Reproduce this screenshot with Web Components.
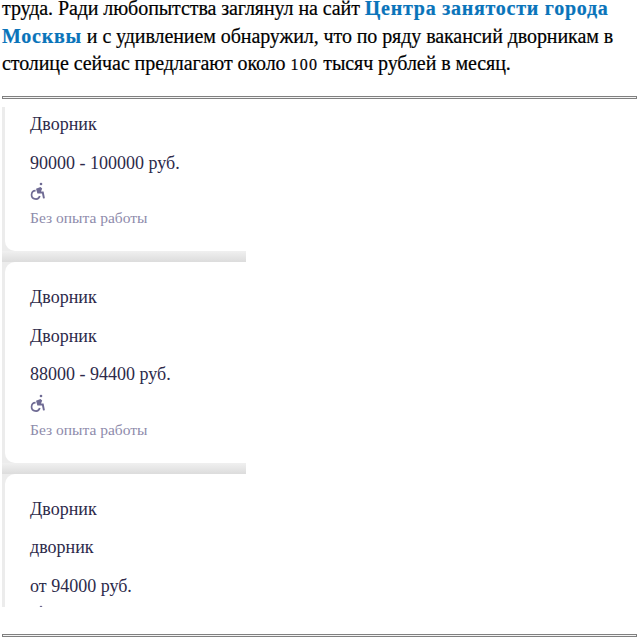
<!DOCTYPE html>
<html><head><meta charset="utf-8"><style>
html,body{margin:0;padding:0;background:#fff;overflow:hidden}
body{width:637px;height:638px}
</style></head><body>
<article-page>
<job-card><span>Дворник</span><span>90000 - 100000 руб.</span><small slot="exp">Без опыта работы</small></job-card>
<job-card><span>Дворник</span><span>Дворник</span><span>88000 - 94400 руб.</span><small slot="exp">Без опыта работы</small></job-card>
<job-card><span>Дворник</span><span>дворник</span><span>от 94000 руб.</span></job-card>
</article-page>
<script>
const wheel=`<svg width="16" height="18" viewBox="0 0 16 18" aria-hidden="true" style="display:block"><circle cx="11" cy="2" r="1.3" fill="currentColor"/><path d="M6 6.8 10.5 5 12.2 6.4 11 9.5h2.6l1.3 6.8-1.9.3-1-5H7.4z" fill="currentColor"/><path d="M5.6 8.6A4.2 4.2 0 1 0 9.8 14" fill="none" stroke="currentColor" stroke-width="1.7"/></svg>`;
class ArticlePage extends HTMLElement{connectedCallback(){const s=this.attachShadow({mode:'open'});s.innerHTML=`<style>
:host{display:flex;flex-direction:column;height:638px;box-sizing:border-box;font-family:"Liberation Serif",serif;color:#000}
p{margin:-5px 0 0;padding:0 0 0 2px;font-size:20px;letter-spacing:-.085px;line-height:27.6px;height:101px;white-space:nowrap;box-sizing:border-box;-webkit-text-stroke:.2px currentColor}
a{color:#0a74ba;font-weight:700;text-decoration:none;letter-spacing:.75px}
.old{font-size:16px;letter-spacing:1.3px}
hr{border:1px solid #808080;height:1px;margin:0 0 0 2px;box-sizing:content-box;flex:none;background:#f4f4f4}
.list{margin:8px 0 0 2px;width:244px;height:500px;overflow:hidden;flex:none}
.bottom{margin-top:27px}
::slotted(job-card:first-child){margin-top:-18px}
</style>
<p>труда. Ради любопытства заглянул на сайт <a>Центра занятости города</a><br><a>Москвы</a> и с удивлением обнаружил, что по ряду вакансий дворникам в<br>столице сейчас предлагают около <span class="old">100</span> тысяч рублей в месяц.</p>
<hr>
<div class="list"><slot></slot></div>
<hr class="bottom">`;}}
class JobCard extends HTMLElement{connectedCallback(){const s=this.attachShadow({mode:'open'});s.innerHTML=`<style>
:host{display:block;box-sizing:border-box;padding:0 0 11px 3px;background:linear-gradient(to bottom,#f0f0f0,#dcdcdc) bottom/100% 11px no-repeat,#ececec;font-family:"Liberation Serif",serif;font-size:18px;color:#2d2a4a}
.in{background:#fff;border-radius:10px 0 0 10px;padding:22px 24px 23px 25px;display:flex;flex-direction:column}
::slotted(span){display:block;line-height:26px;margin-bottom:12.5px}
.ic{color:#6f6b94;height:18px;margin-top:-6px}
.ex{color:#8e8bab;font-size:15.5px;line-height:20px;margin-top:8px}
::slotted(small){font-size:inherit}
</style><div class="in"><slot></slot><div class="ic">${wheel}</div><div class="ex"><slot name="exp"></slot></div></div>`;}}
customElements.define('article-page',ArticlePage);customElements.define('job-card',JobCard);
</script>
</body></html>
